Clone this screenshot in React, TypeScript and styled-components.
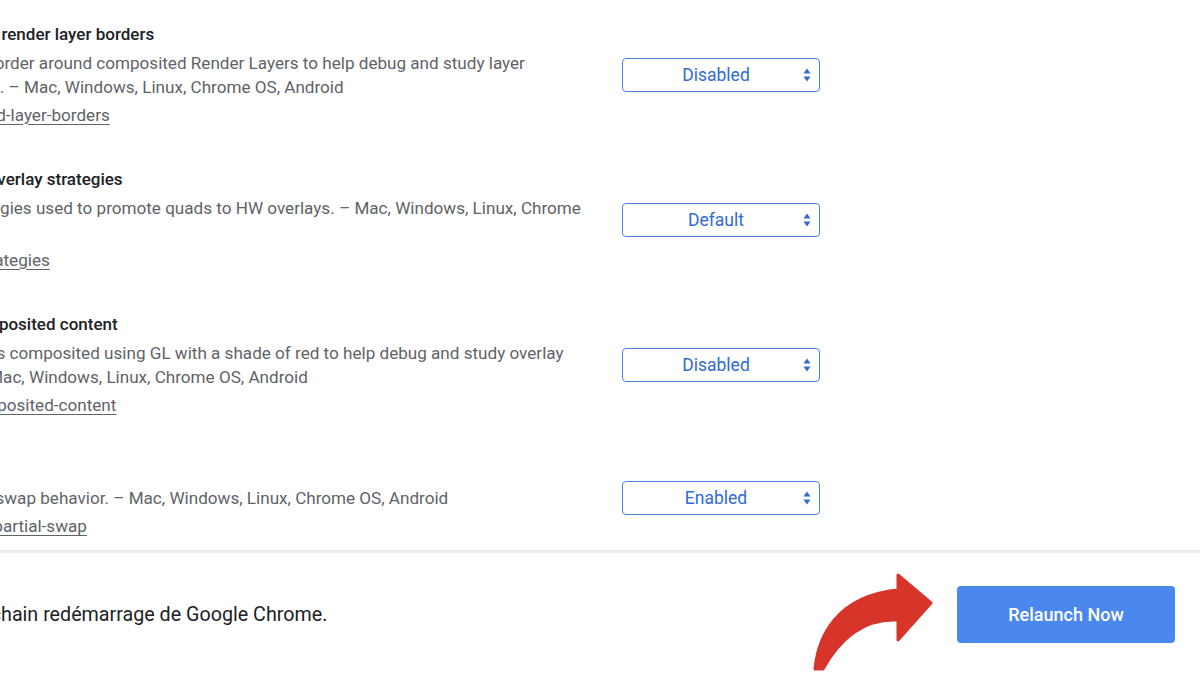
import React from "react";
import styled, { createGlobalStyle } from "styled-components";

interface Flag {
  title: string;
  description: string;
  anchor: string;
  value: string;
}

const flags: Flag[] = [
  {
    title: "Composited render layer borders",
    description:
      "Renders a border around composited Render Layers to help debug and study layer compositing. – Mac, Windows, Linux, Chrome OS, Android",
    anchor: "#composited-layer-borders",
    value: "Disabled",
  },
  {
    title: "Select HW overlay strategies",
    description:
      "Select strategies used to promote quads to HW overlays. – Mac, Windows, Linux, Chrome OS, Android",
    anchor: "#overlay-strategies",
    value: "Default",
  },
  {
    title: "Tint GL-composited content",
    description:
      "Tint contents composited using GL with a shade of red to help debug and study overlay support. – Mac, Windows, Linux, Chrome OS, Android",
    anchor: "#tint-gl-composited-content",
    value: "Disabled",
  },
  {
    title: "Partial swap",
    description: "Sets partial swap behavior. – Mac, Windows, Linux, Chrome OS, Android",
    anchor: "#ui-disable-partial-swap",
    value: "Enabled",
  },
];

const GlobalStyle = createGlobalStyle`
  html, body {
    margin: 0;
    padding: 0;
    background: #ffffff;
    overflow: hidden;
  }
  body {
    font-family: Roboto, "Liberation Sans", sans-serif;
  }
`;

const SelectArrows = () => (
  <svg width="8" height="14" viewBox="0 0 8 14">
    <path d="M4 0.5 L7.5 5.5 L0.5 5.5 Z" fill="#2f6bd3" />
    <path d="M4 13.5 L7.5 8.5 L0.5 8.5 Z" fill="#2f6bd3" />
  </svg>
);

const RedArrow = () => (
  <svg width="140" height="110" viewBox="800 565 140 110">
    <path
      d="M815 670 C818 637 837 597 898 591 L898 576 L931 604 L898 641 L898 621 C862 619 839 641 823 670 Z"
      fill="#d8352a"
      stroke="#d8352a"
      strokeWidth="3"
      strokeLinejoin="round"
    />
  </svg>
);

const App: React.FC = () => {
  return (
    <>
      <GlobalStyle />
      <StyledPage>
        <StyledMain>
          <StyledList>
            {flags.map((flag) => (
              <StyledFlag key={flag.anchor}>
                <StyledText>
                  <StyledTitle>{flag.title}</StyledTitle>
                  <StyledDescription>{flag.description}</StyledDescription>
                  <StyledAnchor>{flag.anchor}</StyledAnchor>
                </StyledText>
                <StyledSelect>
                  <span>{flag.value}</span>
                  <StyledArrows>
                    <SelectArrows />
                  </StyledArrows>
                </StyledSelect>
              </StyledFlag>
            ))}
          </StyledList>
        </StyledMain>
        <StyledFooter>
          <StyledNotice>
            Vos modifications seront prises en compte au prochain redémarrage de Google Chrome.
          </StyledNotice>
          <StyledPointer>
            <RedArrow />
          </StyledPointer>
          <StyledRelaunch>Relaunch Now</StyledRelaunch>
        </StyledFooter>
      </StyledPage>
    </>
  );
};

const StyledPage = styled.div`
  display: flex;
  flex-direction: column;
  width: 1200px;
  height: 675px;
`;

const StyledMain = styled.div`
  flex: 1;
  overflow: hidden;
`;

const StyledList = styled.div`
  display: flex;
  flex-direction: column;
  margin-left: -95px;
  padding-top: 2px;
`;

const StyledFlag = styled.div`
  display: flex;
  align-items: center;
  padding: 20px 0;
`;

const StyledText = styled.div`
  width: 695px;
  flex-shrink: 0;
`;

const StyledTitle = styled.div`
  font-size: 17px;
  line-height: 24px;
  font-weight: 500;
  color: #202124;
  white-space: nowrap;
`;

const StyledDescription = styled.div`
  margin-top: 5px;
  font-size: 17.1px;
  line-height: 24px;
  color: #5f6368;
`;

const StyledAnchor = styled.div`
  margin-top: 4px;
  font-size: 17.1px;
  line-height: 24px;
  color: #5f6368;
  text-decoration: underline;
  text-underline-offset: 3px;
`;

const StyledSelect = styled.div`
  position: relative;
  margin-left: 22px;
  width: 198px;
  height: 34px;
  box-sizing: border-box;
  border: 1px solid #4a82de;
  border-radius: 4px;
  padding-right: 10px;
  display: flex;
  align-items: center;
  justify-content: center;
  font-size: 17.5px;
  color: #2f6bd3;
`;

const StyledArrows = styled.span`
  position: absolute;
  right: 8px;
  top: 9px;
  display: flex;
`;

const StyledFooter = styled.div`
  position: relative;
  height: 122px;
  flex-shrink: 0;
  display: flex;
  align-items: center;
  justify-content: space-between;
  border-top: 3px solid #ebebeb;
  padding-right: 25px;
`;

const StyledNotice = styled.div`
  margin-left: -444px;
  font-size: 19.7px;
  color: #202124;
  white-space: nowrap;
`;

const StyledPointer = styled.div`
  position: absolute;
  left: 800px;
  top: 11px;
  line-height: 0;
`;

const StyledRelaunch = styled.button`
  width: 218px;
  height: 57px;
  border: none;
  border-radius: 4px;
  background: #4a88ee;
  color: #ffffff;
  font-family: Roboto, "Liberation Sans", sans-serif;
  font-size: 18px;
  font-weight: 500;
  cursor: pointer;
`;

export default App;
